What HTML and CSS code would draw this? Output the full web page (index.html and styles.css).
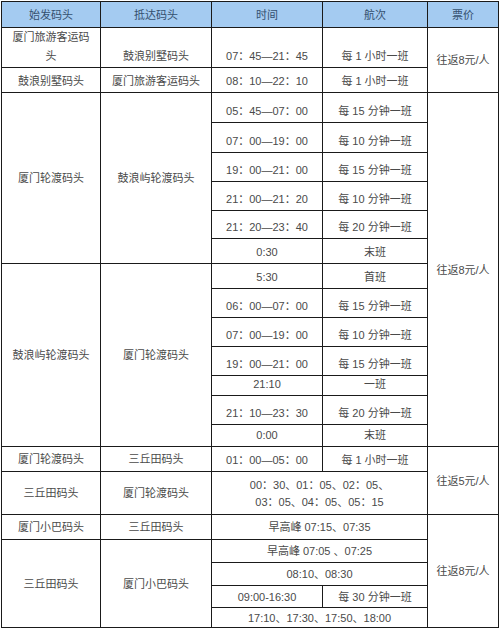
FILE: index.html
```html
<!DOCTYPE html>
<html lang="zh-CN">
<head>
<meta charset="utf-8">
<title>鼓浪屿轮渡时刻表</title>
<link rel="stylesheet" href="styles.css">
</head>
<body>
<div class="wrap">
<table class="sched">
  <colgroup>
    <col class="c-a"><col class="c-b"><col class="c-c"><col class="c-d"><col class="c-e">
  </colgroup>
  <thead>
    <tr class="h-head">
      <th>始发码头</th><th>抵达码头</th><th>时间</th><th>航次</th><th>票价</th>
    </tr>
  </thead>
  <tbody>
    <tr class="h40">
      <td class="two">厦门旅游客运码<br>头</td>
      <td class="t">鼓浪别墅码头</td>
      <td class="t">07：45—21：45</td>
      <td class="t">每 1 小时一班</td>
      <td rowspan="2" class="mid">往返8元/人</td>
    </tr>
    <tr class="h25">
      <td class="t">鼓浪别墅码头</td>
      <td class="t">厦门旅游客运码头</td>
      <td class="t">08：10—22：10</td>
      <td class="t">每 1 小时一班</td>
    </tr>

    <tr class="h30">
      <td rowspan="6" class="mid">厦门轮渡码头</td>
      <td rowspan="6" class="mid">鼓浪屿轮渡码头</td>
      <td class="t">05：45—07：00</td>
      <td class="t">每 15 分钟一班</td>
      <td rowspan="13" class="mid">往返8元/人</td>
    </tr>
    <tr class="h30"><td class="t">07：00—19：00</td><td class="t">每 10 分钟一班</td></tr>
    <tr class="h29"><td class="t">19：00—21：00</td><td class="t">每 15 分钟一班</td></tr>
    <tr class="h29"><td class="t">21：00—21：20</td><td class="t">每 10 分钟一班</td></tr>
    <tr class="h28"><td class="t">21：20—23：40</td><td class="t">每 20 分钟一班</td></tr>
    <tr class="h25"><td class="t">0:30</td><td class="t">末班</td></tr>

    <tr class="h25">
      <td rowspan="7" class="mid">鼓浪屿轮渡码头</td>
      <td rowspan="7" class="mid">厦门轮渡码头</td>
      <td class="t">5:30</td>
      <td class="t">首班</td>
    </tr>
    <tr class="h29"><td class="t">06：00—07：00</td><td class="t">每 15 分钟一班</td></tr>
    <tr class="h29"><td class="t">07：00—19：00</td><td class="t">每 10 分钟一班</td></tr>
    <tr class="h29"><td class="t">19：00—21：00</td><td class="t">每 15 分钟一班</td></tr>
    <tr class="h20"><td class="t">21:10</td><td class="t">一班</td></tr>
    <tr class="h29"><td class="t">21：10—23：30</td><td class="t">每 20 分钟一班</td></tr>
    <tr class="h22"><td class="t">0:00</td><td class="t">末班</td></tr>

    <tr class="h25">
      <td class="mid">厦门轮渡码头</td>
      <td class="mid">三丘田码头</td>
      <td class="t">01：00—05：00</td>
      <td class="t">每 1 小时一班</td>
      <td rowspan="2" class="mid">往返5元/人</td>
    </tr>
    <tr class="h43">
      <td class="mid">三丘田码头</td>
      <td class="mid">厦门轮渡码头</td>
      <td colspan="2" class="mid multi">00：30、01：05、02：05、<br>03：05、04：05、05：15</td>
    </tr>

    <tr class="h25">
      <td class="mid">厦门小巴码头</td>
      <td class="mid">三丘田码头</td>
      <td colspan="2" class="mid">早高峰 07:15、07:35</td>
      <td rowspan="5" class="mid">往返8元/人</td>
    </tr>
    <tr class="h23">
      <td rowspan="4" class="mid">三丘田码头</td>
      <td rowspan="4" class="mid">厦门小巴码头</td>
      <td colspan="2" class="mid">早高峰 07:05 、07:25</td>
    </tr>
    <tr class="h23"><td colspan="2" class="mid">08:10、08:30</td></tr>
    <tr class="h22"><td class="mid">09:00-16:30</td><td class="mid">每 30 分钟一班</td></tr>
    <tr class="h20"><td colspan="2" class="mid">17:10、17:30、17:50、18:00</td></tr>
  </tbody>
</table>
</div>
</body>
</html>
```

FILE: styles.css
```css
html, body {
  margin: 0;
  padding: 0;
  background: #ffffff;
}

.wrap {
  padding: 1px 0 0 1px;
}

.sched {
  border-collapse: collapse;
  table-layout: fixed;
  width: 497px;
  font-family: "Liberation Sans", "Noto Sans CJK SC", sans-serif;
  font-size: 11px;
  line-height: 14px;
  color: #4a4a4a;
}

.c-a { width: 99px; }
.c-b { width: 111px; }
.c-c { width: 111px; }
.c-d { width: 105px; }
.c-e { width: 71px; }

.sched th,
.sched td {
  border: 1px solid #1a1a1a;
  padding: 0 2px;
  text-align: center;
  white-space: nowrap;
  overflow: hidden;
}

.sched th {
  background: #a4cbf1;
  color: #34506f;
  font-weight: normal;
  vertical-align: middle;
}

.sched td.t {
  vertical-align: bottom;
  padding-bottom: 4px;
}

.sched td.mid {
  vertical-align: middle;
}

.sched td.two {
  vertical-align: bottom;
  line-height: 19px;
  padding-bottom: 1px;
}

.sched td.multi {
  line-height: 17px;
  padding-top: 2px;
}

.h-head { height: 26px; }
.h20 { height: 20px; }
.h22 { height: 22px; }
.h23 { height: 23px; }
.h25 { height: 25px; }
.h28 { height: 28px; }
.h29 { height: 29px; }
.h30 { height: 30px; }
.h40 { height: 40px; }
.h43 { height: 43px; }
```
